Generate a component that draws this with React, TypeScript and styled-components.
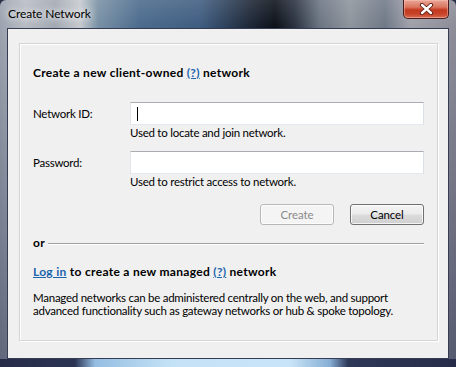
import React from "react";
import styled, { createGlobalStyle } from "styled-components";

const Global = createGlobalStyle`
  html, body { margin: 0; padding: 0; background: #2a3048; }
  body {
    font-family: Lato, "Noto Sans", sans-serif;
    font-size: 11.5px;
    letter-spacing: -0.25px;
    color: #000;
  }
`;

const Window = styled.div`
  width: 456px;
  height: 367px;
  box-sizing: border-box;
  display: flex;
  flex-direction: column;
  padding: 0 7px 8px 7px;
  border-radius: 6px 6px 0 0;
  overflow: hidden;
  background:
    linear-gradient(90deg, #262c48 0px, #2c3454 75px, #94bee2 95px, #c4e2f6 170px, #c8e4f8 290px, #86aed4 330px, #2e3858 348px, #262c48 456px) bottom / 100% 8px no-repeat,
    linear-gradient(180deg, rgba(255,255,255,0.12) 0px, rgba(0,0,0,0) 28px, rgba(20,28,60,0.45) 367px),
    linear-gradient(90deg, #9aa2ae 0px, #b8bcc4 25px, #a2a8b2 55px, #c6cacf 80px, #7890a4 98px, #4a6a8c 140px, #3e5c80 200px, #1c2636 250px, #0c1018 275px, #2a3240 295px, #6a7482 320px, #8e949c 350px, #6e7886 385px, #a0a0aa 410px, #8c8c98 456px);
`;

const TitleBar = styled.div`
  height: 28px;
  display: flex;
  align-items: flex-start;
  flex-shrink: 0;
`;

const Title = styled.div`
  padding: 6px 0 0 1px;
  font-size: 12px;
  line-height: 16px;
  letter-spacing: -0.1px;
  color: #000;
  text-shadow: 0 0 6px rgba(255, 255, 255, 0.9), 0 0 10px rgba(255, 255, 255, 0.7);
`;

const CloseButton = styled.div`
  margin-left: auto;
  width: 46px;
  height: 19px;
  box-sizing: border-box;
  border: 1px solid #4a1c1c;
  border-top: none;
  border-radius: 0 0 5px 5px;
  background: linear-gradient(180deg, #e9a898 0%, #d9745e 40%, #c4391f 55%, #c8452a 80%, #d87058 100%);
  box-shadow: inset 0 0 0 1px rgba(255, 200, 190, 0.45);
  display: flex;
  align-items: center;
  justify-content: center;
`;

const Client = styled.div`
  flex: 1;
  border: 1px solid #363c52;
  background: #f0f0f0;
  padding: 14px 10px 17px 11px;
  display: flex;
`;

const Group = styled.div`
  flex: 1;
  border: 1px solid #d5d5d5;
  box-shadow: 1px 1px 0 #ffffff, inset 1px 1px 0 #ffffff;
  padding: 21px 13px 0 13px;
  display: flex;
  flex-direction: column;
`;

const Heading = styled.div<{ $top?: number }>`
  font-weight: 700;
  font-size: 12px;
  letter-spacing: 0.3px;
  line-height: 16px;
  margin-top: ${(p) => p.$top ?? 0}px;
`;

const Link = styled.a`
  color: #1a64ac;
  text-decoration: underline;
  cursor: pointer;
`;

const Form = styled.div`
  display: grid;
  grid-template-columns: 97px 294px;
  margin-top: 21px;
`;

const Label = styled.div`
  line-height: 23px;
  height: 23px;
`;

const TextBox = styled.div<{ $top?: number }>`
  height: 23px;
  box-sizing: border-box;
  background: #fff;
  border: 1px solid;
  border-color: #abadb3 #dbdfe6 #e3e9ef #e2e3ea;
  margin-top: ${(p) => p.$top ?? 0}px;
  display: flex;
  align-items: center;
  padding-left: 6px;
`;

const LabelCell = styled.div<{ $top?: number }>`
  margin-top: ${(p) => p.$top ?? 0}px;
`;

const Caret = styled.span`
  display: inline-block;
  width: 1px;
  height: 14px;
  background: #000;
`;

const Hint = styled.div`
  grid-column: 2;
  line-height: 16px;
`;

const ButtonRow = styled.div`
  display: flex;
  justify-content: flex-end;
  gap: 16px;
  margin-top: 14px;
`;

const Button = styled.button<{ $disabled?: boolean }>`
  width: 74px;
  height: 21px;
  padding: 0;
  font-family: inherit;
  font-size: 11.5px;
  letter-spacing: -0.1px;
  border-radius: 3px;
  border: 1px solid ${(p) => (p.$disabled ? "#b4b8bb" : "#707070")};
  color: ${(p) => (p.$disabled ? "#8a8a8a" : "#000")};
  background: ${(p) =>
    p.$disabled
      ? "#f4f4f4"
      : "linear-gradient(180deg, #f4f4f4 0%, #ebebeb 48%, #dcdcdc 52%, #cfcfcf 100%)"};
  box-shadow: inset 0 0 0 1px rgba(255, 255, 255, 0.75);
`;

const OrRow = styled.div`
  display: flex;
  align-items: center;
  gap: 3px;
  margin-top: 10px;
  font-weight: 700;
  font-size: 12px;
  letter-spacing: 0.3px;
  line-height: 16px;
`;

const Rule = styled.div`
  flex: 1;
  height: 1px;
  background: #a0a0a0;
  box-shadow: 0 1px 0 #ffffff;
`;

const Para = styled.p`
  margin: 11px 0 0 0;
  line-height: 13px;
`;

const CloseGlyph = () => (
  <svg width="15" height="12" viewBox="0 0 15 12">
    <path d="M3 2 L12 10 M12 2 L3 10" stroke="#5a1a14" strokeWidth="4.2" strokeLinecap="round" />
    <path d="M3 2 L12 10 M12 2 L3 10" stroke="#ffffff" strokeWidth="2.4" strokeLinecap="round" />
  </svg>
);

export default function App() {
  return (
    <>
      <Global />
      <Window>
        <TitleBar>
          <Title>Create Network</Title>
          <CloseButton>
            <CloseGlyph />
          </CloseButton>
        </TitleBar>
        <Client>
          <Group>
            <Heading>
              Create a new client-owned <Link>(?)</Link> network
            </Heading>
            <Form>
              <LabelCell>
                <Label>Network ID:</Label>
              </LabelCell>
              <TextBox>
                <Caret />
              </TextBox>
              <Hint>Used to locate and join network.</Hint>
              <LabelCell $top={10}>
                <Label>Password:</Label>
              </LabelCell>
              <TextBox $top={10} />
              <Hint>Used to restrict access to network.</Hint>
            </Form>
            <ButtonRow>
              <Button $disabled>Create</Button>
              <Button>Cancel</Button>
            </ButtonRow>
            <OrRow>
              or
              <Rule />
            </OrRow>
            <Heading $top={13}>
              <Link>Log in</Link> to create a new managed <Link>(?)</Link> network
            </Heading>
            <Para>
              Managed networks can be administered centrally on the web, and support
              <br />
              advanced functionality such as gateway networks or hub &amp; spoke topology.
            </Para>
          </Group>
        </Client>
      </Window>
    </>
  );
}
